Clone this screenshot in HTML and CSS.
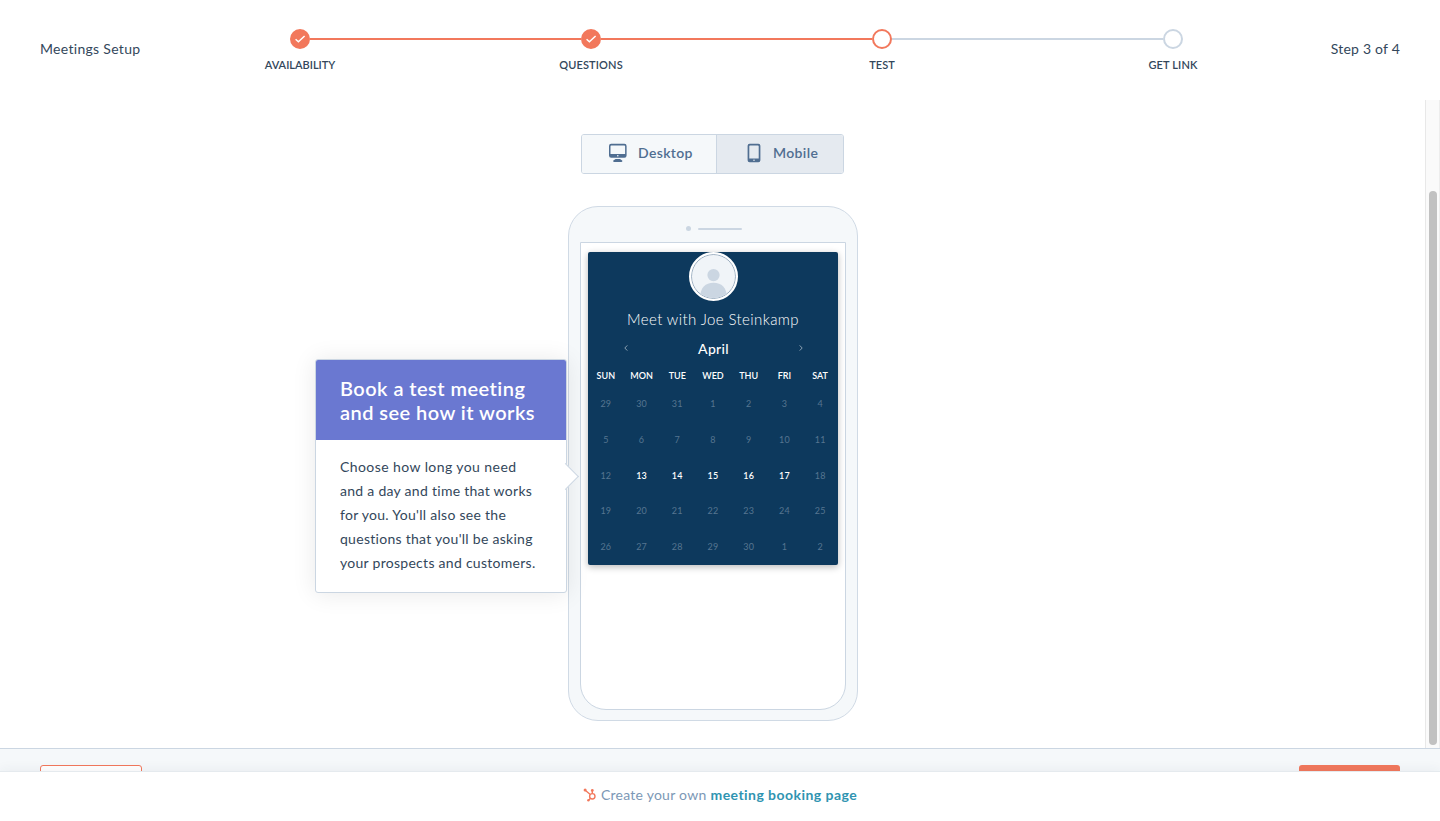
FILE: index.html
```html
<!DOCTYPE html>
<html lang="en">
<head>
<meta charset="utf-8">
<title>Meetings Setup</title>
<link rel="stylesheet" href="styles.css">
</head>
<body>
<header class="header">
  <div class="header-title"><span>Meetings Setup</span></div>
  <ol class="steps">
    <li class="step done"><span class="dot"><svg width="20" height="20" viewBox="0 0 20 20"><path d="M5.6 10.300l2.800 2.500 6.200-5.800"/></svg></span><span class="step-name">AVAILABILITY</span></li>
    <li class="step done"><span class="dot"><svg width="20" height="20" viewBox="0 0 20 20"><path d="M5.6 10.300l2.800 2.500 6.200-5.800"/></svg></span><span class="step-name wide">QUESTIONS</span></li>
    <li class="step current"><span class="dot"></span><span class="step-name">TEST</span></li>
    <li class="step"><span class="dot"></span><span class="step-name wide">GET LINK</span></li>
  </ol>
  <div class="header-count"><span>Step 3 of 4</span></div>
</header>
<div class="body">
  <main class="content">
    <div class="toggle">
      <button class="toggle-btn desktop">
        <svg width="20" height="20" viewBox="0 0 20 20"><path fill-rule="evenodd" d="M3.200.8h13.200a2.200 2.200 0 0 1 2.200 2.200v9.600a2.200 2.200 0 0 1-2.200 2.200H3.200A2.200 2.200 0 0 1 1 12.600V3A2.200 2.200 0 0 1 3.200.8zM3.300 2.400a.8.8 0 0 0-.8.8v7.800h14.600V3.200a.8.8 0 0 0-.8-.8zM9.800 12a.8.8 0 1 0 0 1.600.8.8 0 0 0 0-1.600z"/><path d="M7.600 16h4.400l2.200 1.600c.4.800 0 1.300-.7 1.300H6.100c-.8 0-1.200-.5-.8-1.300z"/></svg>
        <span>Desktop</span>
      </button>
      <button class="toggle-btn mobile">
        <svg width="14" height="20" viewBox="0 0 14 20"><path fill-rule="evenodd" d="M2.600.8h8.800a2 2 0 0 1 2 2v14.500a2 2 0 0 1-2 2H2.600a2 2 0 0 1-2-2V2.800a2 2 0 0 1 2-2zM3.100 2.400a.8.8 0 0 0-.8.8v12.200h9.400V3.200a.8.8 0 0 0-.8-.8zM7 16.400a.8.8 0 1 0 0 1.600.8.8 0 0 0 0-1.600z"/></svg>
        <span>Mobile</span>
      </button>
    </div>
    <div class="preview">
      <section class="phone">
        <div class="phone-top"><span class="camera"></span><span class="speaker"></span></div>
        <div class="screen">
          <div class="card">
            <div class="avatar"><svg width="45" height="45" viewBox="0 0 45 45"><circle cx="22.500" cy="21" r="6.400"/><path d="M8.500 45c0-11 5.500-16 14-16s14 5 14 16z"/></svg></div>
            <h2 class="meet">Meet with Joe Steinkamp</h2>
            <div class="month">
              <svg width="6" height="8" viewBox="0 0 6 8"><path d="M4.300 1.400L1.800 4l2.500 2.600"/></svg>
              <span>April</span>
              <svg width="6" height="8" viewBox="0 0 6 8"><path d="M1.700 1.400L4.200 4 1.700 6.600"/></svg>
            </div>
            <div class="weekdays"><span>SUN</span><span>MON</span><span>TUE</span><span>WED</span><span>THU</span><span>FRI</span><span>SAT</span></div>
            <div class="days">
              <span>29</span><span>30</span><span>31</span><span>1</span><span>2</span><span>3</span><span>4</span>
              <span>5</span><span>6</span><span>7</span><span>8</span><span>9</span><span>10</span><span>11</span>
              <span>12</span><span class="open">13</span><span class="open">14</span><span class="open">15</span><span class="open">16</span><span class="open">17</span><span>18</span>
              <span>19</span><span>20</span><span>21</span><span>22</span><span>23</span><span>24</span><span>25</span>
              <span>26</span><span>27</span><span>28</span><span>29</span><span>30</span><span>1</span><span>2</span>
            </div>
          </div>
        </div>
      </section>
      <aside class="tip">
        <h3 class="tip-title">Book a test meeting<br>and see how it works</h3>
        <p class="tip-text"><span class="loose">Choose how long you need</span><br>and a day and time that works<br>for you. You'll also see the<br>questions that you'll be asking<br>your prospects and customers.</p>
      </aside>
    </div>
  </main>
  <div class="scrollbar"><div class="thumb"></div></div>
</div>
<div class="actions"><div class="btn-back"></div><div class="btn-next"></div></div>
<footer class="brand">
  <svg class="sprocket" width="14" height="14" viewBox="0 0 14 14"><circle cx="9.300" cy="8.300" r="2.700"/><path d="M9.300 5.600V2.600M7.300 6.500L2.200 2.300M7.500 10.200l-1.700 1.700"/><circle class="solid" cx="9.300" cy="2.400" r="1.400"/><circle class="solid" cx="2.100" cy="2" r="1.500"/><circle class="solid" cx="5.400" cy="12.200" r="1.200"/></svg>
  <span class="brand-text">Create your own</span>
  <a class="brand-link">meeting booking page</a>
</footer>
</body>
</html>
```
FILE: styles.css
```css
* { box-sizing: border-box; }
body {
  margin: 0;
  height: 821px;
  overflow: hidden;
  display: flex;
  flex-direction: column;
  background: #fff;
  color: #33475b;
  font-family: Lato, "Open Sans", sans-serif;
  font-size: 14px;
  font-variant-ligatures: none;
}
.header {
  flex: 0 0 100px;
  display: flex;
  padding: 0 40px;
  line-height: 20px;
}
.header-title { flex: 0 0 114.5px; padding-top: 39px; white-space: nowrap; letter-spacing: .3px; }
.header-count { flex: 1; padding-top: 39px; text-align: right; white-space: nowrap; letter-spacing: .2px; }
.steps {
  flex: 0 0 1164px;
  display: grid;
  grid-template-columns: repeat(4, 1fr);
  margin: 0;
  padding: 29px 0 0;
  list-style: none;
}
.step {
  position: relative;
  display: flex;
  flex-direction: column;
  align-items: center;
  gap: 6px;
}
.step + .step::before {
  content: "";
  position: absolute;
  left: calc(-50% + 10px);
  right: calc(50% + 10px);
  top: 9px;
  height: 2px;
  background: #cbd6e2;
}
.step.done::before, .step.current::before { background: #f2785c !important; }
.dot {
  width: 20px;
  height: 20px;
  border: 2px solid #cbd6e2;
  border-radius: 50%;
  background: #fff;
}
.dot svg { display: block; margin: -2px; fill: none; stroke: #fff; stroke-width: 1.5; }
.done .dot { border-color: #f2785c; background: #f2785c; }
.current .dot { border-color: #f2785c; }
.step-name { font-size: 11px; font-weight: 600; line-height: 20px; }
.step-name.wide { letter-spacing: .15px; }

.body { flex: 0 0 648px; display: flex; }
.content {
  flex: 1;
  display: flex;
  flex-direction: column;
  align-items: center;
  padding-top: 34px;
}
.scrollbar {
  width: 15px;
  padding: 91px 3px 3px;
  border-left: 1px solid #e8e8e8;
  border-right: 1px solid #ededed;
  background: #fafafa;
}
.thumb { width: 8px; height: 554px; border-radius: 4px; background: #c1c1c1; }

.toggle {
  display: flex;
  width: 263px;
  height: 40px;
  border: 1px solid #cbd6e2;
  border-radius: 3px;
  overflow: hidden;
}
.toggle-btn {
  display: flex;
  align-items: center;
  border: 0;
  padding: 0 0 2px;
  background: #f5f8fa;
  color: #506e91;
  font: 600 14px/20px Lato, sans-serif;
  letter-spacing: .35px;
}
.toggle-btn svg { fill: #506e91; }
.desktop { width: 134px; padding-left: 26px; gap: 10px; }
.mobile { flex: 1; border-left: 1px solid #cbd6e2; padding-left: 30px; gap: 12px; background: #e5eaf0; }

.preview { position: relative; margin: 32px 0 0 1px; }
.phone {
  width: 290px;
  height: 515px;
  padding: 0 11px;
  border: 1px solid #d0dae5;
  border-radius: 30px;
  background: #f5f8fa;
}
.phone-top {
  height: 35px;
  display: flex;
  align-items: center;
  justify-content: center;
  gap: 7px;
  padding: 8px 0 0 1px;
}
.camera { width: 5px; height: 5px; border-radius: 50%; background: #cbd6e2; }
.speaker { width: 44px; height: 2px; border-radius: 1px; background: #cbd6e2; }
.screen {
  height: 468px;
  padding: 9px 7px;
  border: 1px solid #cbd6e2;
  border-radius: 0 0 26px 26px;
  background: #fff;
}
.card {
  display: flex;
  flex-direction: column;
  width: 250px;
  height: 313px;
  border-radius: 2px;
  background: #0d395d;
  box-shadow: 0 2px 7px rgba(0, 0, 0, .28);
  color: #fff;
}
.avatar {
  align-self: center;
  width: 49px;
  height: 49px;
  border: 2px solid #fff;
  border-radius: 50%;
  overflow: hidden;
  background: #f0f4f8;
}
.avatar svg { display: block; border: 1px solid #9badbf; border-radius: 50%; fill: #cbd6e2; }
.meet { margin: 9px 0 0; font-size: 15px; font-weight: 300; line-height: 19px; text-align: center; white-space: nowrap; letter-spacing: .4px; }
.month {
  display: flex;
  align-items: center;
  justify-content: space-between;
  margin-top: 10px;
  padding: 0 34px 0 35px;
  font-weight: 500;
  line-height: 20px;
  letter-spacing: .3px;
}
.month svg { margin-bottom: 2px; fill: none; stroke: #8ba1b3; stroke-width: 1; }
.weekdays {
  display: grid;
  grid-template-columns: repeat(7, 1fr);
  margin-top: 12px;
  font-size: 9px;
  font-weight: 600;
  line-height: 10px;
  text-align: center;
}
.days {
  display: grid;
  grid-template-columns: repeat(7, 1fr);
  grid-auto-rows: 35.700px;
  align-items: center;
  margin-top: 5.400px;
  color: #567590;
  font-size: 9px;
  line-height: 10px;
  text-align: center;
  letter-spacing: .2px;
}
.open { color: #fff; font-weight: 600; }

.tip {
  position: absolute;
  left: -253px;
  top: 153px;
  width: 252px;
  height: 234px;
  border: 1px solid #cbd6e2;
  border-radius: 3px;
  background: #fff;
  box-shadow: 0 1px 24px rgba(0, 0, 0, .09);
}
.tip::after {
  content: "";
  position: absolute;
  top: 107px;
  right: -9px;
  width: 18px;
  height: 18px;
  border: 1px solid #cbd6e2;
  border-left: 0;
  border-bottom: 0;
  background: #fff;
  transform: rotate(45deg);
}
.tip-title {
  height: 80px;
  margin: 0;
  padding: 16px 24px;
  border-radius: 2px 2px 0 0;
  background: #6a78d1;
  color: #fff;
  font-size: 20px;
  font-weight: 600;
  line-height: 24px;
  white-space: nowrap;
  letter-spacing: .45px;
}
.tip-text { margin: 0; padding: 15px 24px; line-height: 24px; white-space: nowrap; letter-spacing: .28px; }
.loose { letter-spacing: .42px; }

.actions {
  flex: 0 0 23px;
  display: flex;
  justify-content: space-between;
  padding: 16px 40px 0;
  border-top: 1px solid #cbd6e2;
  background: #f5f8fa;
  overflow: hidden;
}
.btn-back { width: 102px; height: 40px; border: 1px solid #f2785c; border-radius: 3px; background: #fff; }
.btn-next { width: 101px; height: 40px; border-radius: 3px; background: #f2785c; }
.brand {
  position: relative;
  flex: 1;
  display: flex;
  align-items: flex-start;
  justify-content: center;
  padding-top: 13px;
  border-top: 1px solid #e5eaee;
  background: #fff;
  box-shadow: 0 0 12px rgba(45, 62, 80, .07);
  line-height: 20px;
}
.sprocket { margin: 3px 4px 0 0; fill: none; stroke: #f2785c; stroke-width: 1.400; }
.sprocket .solid { fill: #f2785c; stroke: none; }
.brand-text { color: #7c98b6; margin-right: 4px; letter-spacing: .25px; }
.brand-link { color: #2f94b1; font-weight: 700; letter-spacing: .45px; }
```
